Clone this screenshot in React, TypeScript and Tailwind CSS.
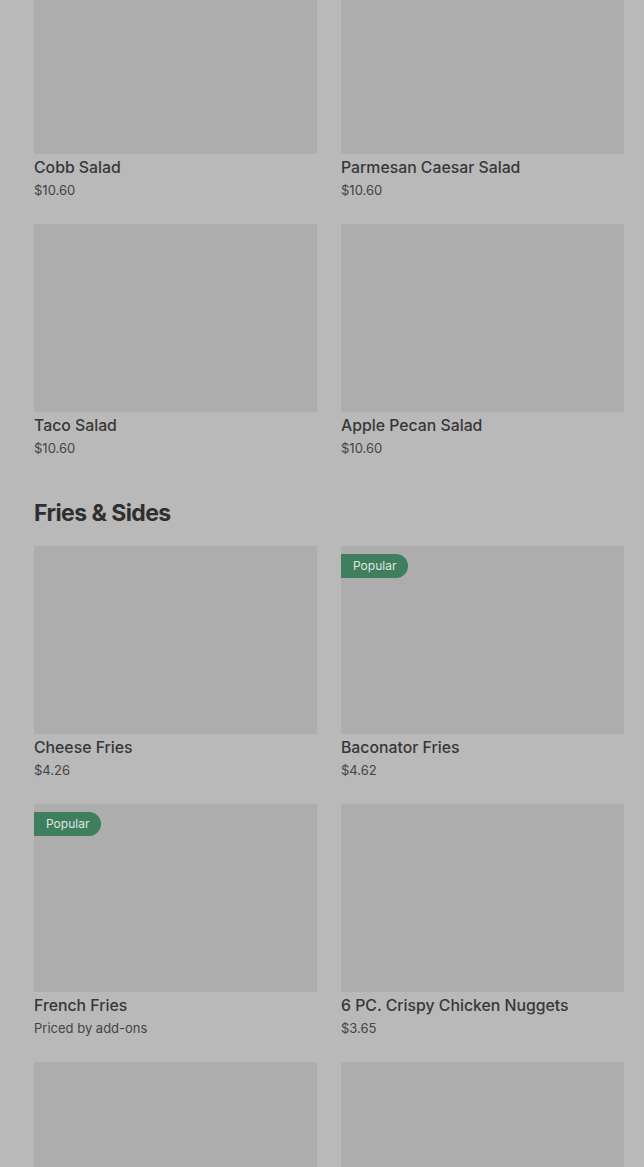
import { FC } from "react";

type Item = { name: string; price: string; popular?: boolean };

const SALADS: Item[] = [
  { name: "Cobb Salad", price: "$10.60" },
  { name: "Parmesan Caesar Salad", price: "$10.60" },
  { name: "Taco Salad", price: "$10.60" },
  { name: "Apple Pecan Salad", price: "$10.60" },
];

const SIDES: Item[] = [
  { name: "Cheese Fries", price: "$4.26" },
  { name: "Baconator Fries", price: "$4.62", popular: true },
  { name: "French Fries", price: "Priced by add-ons", popular: true },
  { name: "6 PC. Crispy Chicken Nuggets", price: "$3.65" },
];

const ItemImage: FC<{ popular?: boolean }> = ({ popular }) => (
  <div className="relative h-[188px] bg-[#adadad]">
    {popular && (
      <span className="absolute left-0 top-[8px] flex h-[24px] items-center rounded-r-full bg-[#3f7f5e] px-3 text-[12px] text-[#dfe6e2]">
        Popular
      </span>
    )}
  </div>
);

const ItemCard: FC<{ item: Item }> = ({ item }) => (
  <div className="flex flex-col">
    <ItemImage popular={item.popular} />
    <div className="mt-[4px] text-[15.8px] font-medium leading-5 text-[#373737]">
      {item.name}
    </div>
    <div className="mt-[2px] text-[13px] leading-5 text-[#444]">
      {item.price}
    </div>
  </div>
);

export default function App() {
  return (
    <div
      className="h-[1167px] overflow-hidden bg-[#b9b9b9]"
      style={{ fontFamily: "Inter, 'Noto Sans', sans-serif" }}
    >
      <div className="-mt-[34px] pl-[34px] pr-[20px]">
        <div className="grid grid-cols-2 gap-[24px]">
          {SALADS.map((item) => (
            <ItemCard key={item.name} item={item} />
          ))}
        </div>

        <h2 className="mt-[39px] text-[23px] font-bold leading-8 tracking-tight text-[#2f2f2f]">
          Fries &amp; Sides
        </h2>

        <div className="mt-[17px] grid grid-cols-2 gap-[24px]">
          {SIDES.map((item) => (
            <ItemCard key={item.name} item={item} />
          ))}
          <ItemImage />
          <ItemImage />
        </div>
      </div>
    </div>
  );
}
